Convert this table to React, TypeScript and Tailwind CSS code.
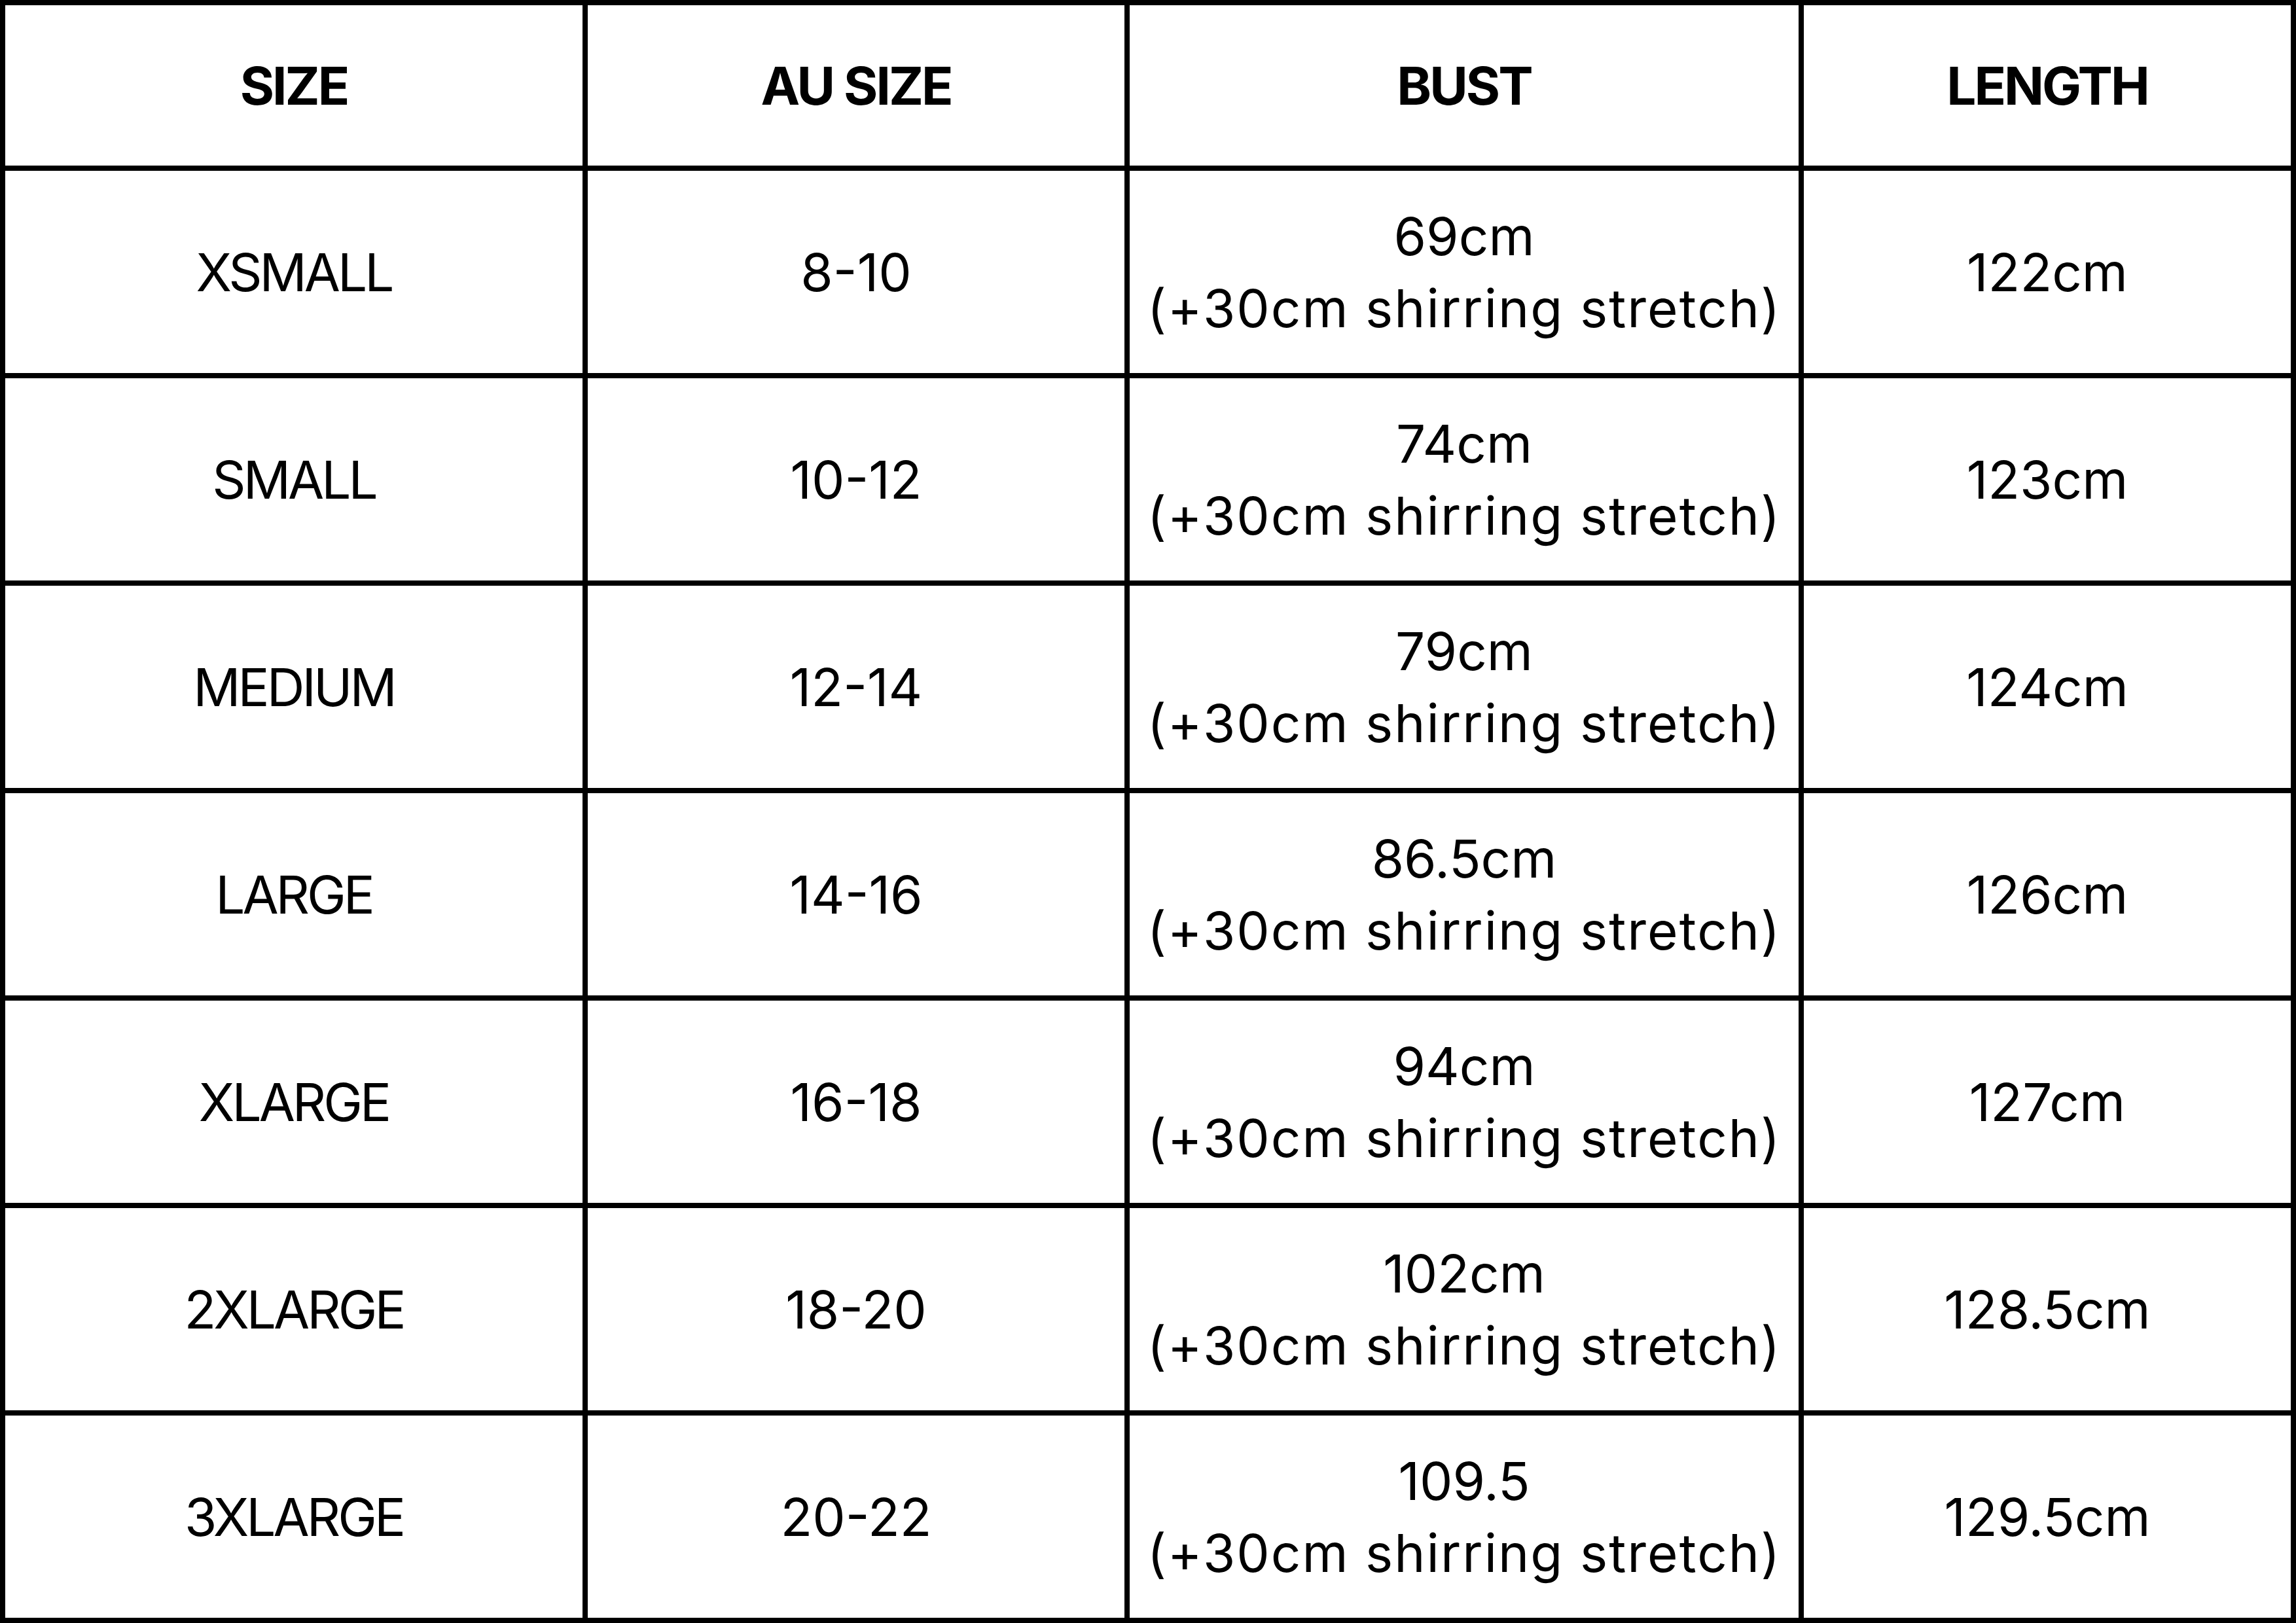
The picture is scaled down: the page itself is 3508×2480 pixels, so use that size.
import React from "react";

const rows = [
  ["XSMALL", "8-10", "69cm", "122cm"],
  ["SMALL", "10-12", "74cm", "123cm"],
  ["MEDIUM", "12-14", "79cm", "124cm"],
  ["LARGE", "14-16", "86.5cm", "126cm"],
  ["XLARGE", "16-18", "94cm", "127cm"],
  ["2XLARGE", "18-20", "102cm", "128.5cm"],
  ["3XLARGE", "20-22", "109.5", "129.5cm"],
];

export default function App() {
  return (
    <div
      className="w-[3508px] h-[2480px] bg-black p-[8px] grid grid-cols-[882px_820px_1022px_744px] grid-rows-[245px_repeat(7,309px)] gap-[8px] text-black text-[80px] leading-[110px]"
      style={{ fontFamily: "Inter, 'Open Sans', sans-serif" }}
    >
      {["SIZE", "AU SIZE", "BUST", "LENGTH"].map((h) => (
        <div key={h} className="bg-white flex items-center justify-center font-bold tracking-[-3px]">
          {h}
        </div>
      ))}
      {rows.map((r) => (
        <React.Fragment key={r[0]}>
          <div className="bg-white flex items-center justify-center tracking-[-4px]">{r[0]}</div>
          <div className="bg-white flex items-center justify-center">{r[1]}</div>
          <div className="bg-white flex flex-col items-center justify-center text-center">
            <span>{r[2]}</span>
            <span className="tracking-[2px]">(+30cm shirring stretch)</span>
          </div>
          <div className="bg-white flex items-center justify-center">{r[3]}</div>
        </React.Fragment>
      ))}
    </div>
  );
}
